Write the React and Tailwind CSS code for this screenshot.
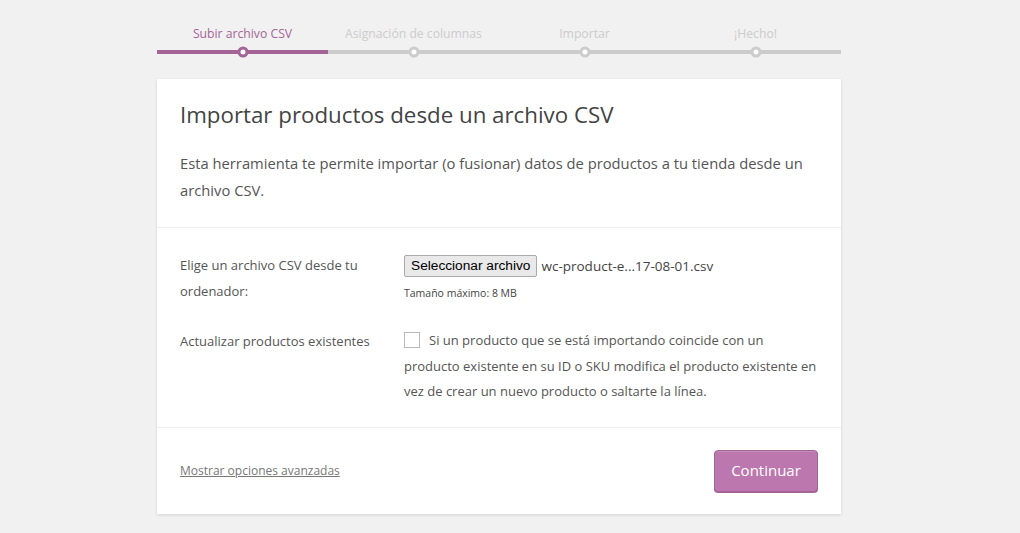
import React from "react";

const steps = ["Subir archivo CSV", "Asignación de columnas", "Importar", "¡Hecho!"];

export default function App() {
  return (
    <div className="min-h-[533px] w-full bg-[#f1f1f1] text-[#555]" style={{ fontFamily: '"Open Sans", "Noto Sans", sans-serif' }}>
      <div className="ml-[157px] w-[684px]">
        {/* Steps */}
        <div className="flex pt-[25px]">
          {steps.map((s, i) => (
            <div key={s} className="flex w-[171px] flex-col items-center">
              <div className={`text-[12.2px] leading-[18px] ${i === 0 ? "text-[#a46497]" : "text-[#ccc]"}`}>{s}</div>
              <div className={`relative mt-[7px] h-[4px] w-full ${i === 0 ? "bg-[#a46497]" : "bg-[#ccc]"}`}>
                <span className={`absolute left-1/2 top-1/2 h-[11px] w-[11px] -translate-x-1/2 -translate-y-1/2 rounded-full border-[3px] bg-white ${i === 0 ? "border-[#a46497]" : "border-[#ccc]"}`} />
              </div>
            </div>
          ))}
        </div>

        {/* Card */}
        <div className="mt-[25px] bg-white shadow-[0_1px_3px_rgba(0,0,0,0.13)]">
          <div className="border-b border-[#eee] px-[23px] pb-[23px] pt-[19px]">
            <h1 className="text-[22.3px] font-normal leading-[34px] text-[#444]">Importar productos desde un archivo CSV</h1>
            <p className="mt-[18px] text-[14.75px] leading-[27px] text-[#555]">
              Esta herramienta te permite importar (o fusionar) datos de productos a tu tienda desde un archivo CSV.
            </p>
          </div>

          <div className="border-b border-[#eee] px-[23px] pb-[22px] pt-[24px]">
            <div className="flex">
              <div className="w-[224px] pr-[20px] text-[13px] leading-[26px]">Elige un archivo CSV desde tu ordenador:</div>
              <div className="flex-1">
                <div className="mt-[3px] flex items-center">
                  <button className="h-[22px] rounded-[2px] border border-[#aaa] bg-[#e9e9e9] px-[6px] text-[13.7px] leading-[20px] text-black" style={{ fontFamily: '"Liberation Sans", Arial, sans-serif' }}>
                    Seleccionar archivo
                  </button>
                  <span className="ml-[4px] text-[13.5px] text-[#444]">wc-product-e...17-08-01.csv</span>
                </div>
                <div className="mt-[9px] text-[10.5px] leading-[14px] text-[#444]">Tamaño máximo: 8 MB</div>
              </div>
            </div>

            <div className="mt-[24px] flex">
              <div className="w-[224px] pr-[20px] text-[13px] leading-[26px]">Actualizar productos existentes</div>
              <div className="flex-1 text-[13px] leading-[25.5px]">
                <span className="mr-[9px] inline-block h-[16px] w-[16px] translate-y-[3px] border border-[#bbb] bg-white" />
                Si un producto que se está importando coincide con un producto existente en su ID o SKU modifica el producto existente en vez de crear un nuevo producto o saltarte la línea.
              </div>
            </div>
          </div>

          <div className="flex items-center justify-between px-[23px] pb-[22px] pt-[22px]">
            <a href="#" className="text-[12px] text-[#777] underline">Mostrar opciones avanzadas</a>
            <button className="h-[42px] w-[104px] rounded-[4px] border border-[#a36597] bg-[#bb77ae] text-[15px] text-white shadow-[inset_0_1px_0_rgba(255,255,255,0.15),0_1px_0_#a36597]">
              Continuar
            </button>
          </div>
        </div>
      </div>
    </div>
  );
}
